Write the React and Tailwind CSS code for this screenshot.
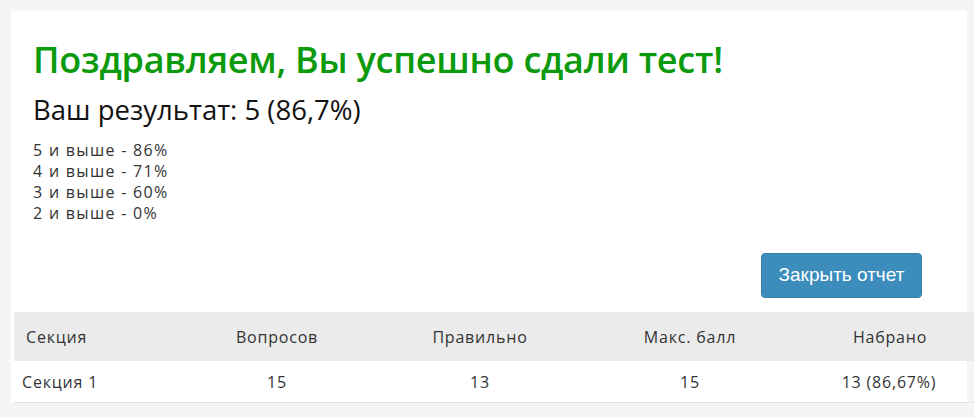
export default function App() {
  const cols = "grid grid-cols-[161px_204px_202px_218px_200px]";
  return (
    <div className="w-[974px] h-[417px] overflow-hidden bg-[#f5f5f5] pt-[11px] pl-[11px]">
      <div className="w-[956px] h-[392px] bg-white" >
        <div className="pl-[22px] pt-[24px]">
          <h1 className="text-[36px] leading-[49px] font-semibold text-[#0b9a0b] font-['Open_Sans',sans-serif] tracking-[-0.25px]">
            Поздравляем, Вы успешно сдали тест!
          </h1>
          <div className="mt-[9px] text-[27.5px] leading-[34px] text-[#111] font-['Open_Sans',sans-serif]">
            Ваш результат: 5 (86,7%)
          </div>
          <div className="mt-[13px] text-[16px] leading-[21px] tracking-[1.3px] text-[#333] font-['Open_Sans',sans-serif]">
            <div>5 и выше - 86%</div>
            <div>4 и выше - 71%</div>
            <div>3 и выше - 60%</div>
            <div>2 и выше - 0%</div>
          </div>
        </div>
        <div className="flex justify-end pr-[45px] mt-[29px]">
          <button className="w-[161px] h-[45px] rounded-[4px] bg-[#3c8dbc] border border-[#367fa9] text-white text-[19px] font-['Liberation_Sans',Arial,sans-serif]">
            Закрыть отчет
          </button>
        </div>
        <div className="mt-[14px] ml-[3px] w-[985px] font-['Open_Sans',sans-serif] text-[16px] tracking-[0.8px] text-[#333]">
          <div className={`${cols} h-[49px] items-center bg-[#ebebeb]`}>
            <div className="pl-[12px]">Секция</div>
            <div className="text-center">Вопросов</div>
            <div className="text-center">Правильно</div>
            <div className="text-center">Макс. балл</div>
            <div className="text-center pr-[18px]">Набрано</div>
          </div>
          <div className={`${cols} h-[42px] items-center border-b border-[#d9e8e4]`}>
            <div className="pl-[8px]">Секция 1</div>
            <div className="text-center">15</div>
            <div className="text-center">13</div>
            <div className="text-center">15</div>
            <div className="text-center pr-[20px]">13 (86,67%)</div>
          </div>
        </div>
      </div>
    </div>
  );
}
